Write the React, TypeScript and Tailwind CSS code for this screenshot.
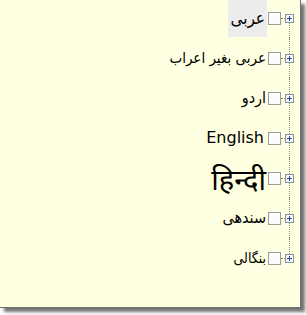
const arabic = "font-['DejaVu_Sans_Condensed','DejaVu_Sans',sans-serif]";

const rows = [
  { label: "عربی", dir: "rtl", cls: `${arabic} text-[17px]`, selected: true },
  { label: "عربی بغیر اعراب", dir: "rtl", cls: `${arabic} text-[15px]` },
  { label: "اردو", dir: "rtl", cls: `${arabic} text-[16px]` },
  { label: "English", dir: "ltr", cls: "font-['DejaVu_Sans',sans-serif] text-[16px] pr-[3px]" },
  { label: "हिन्दी", dir: "ltr", cls: "font-['Noto_Sans','DejaVu_Sans',sans-serif] text-[29px]" },
  { label: "سندھی", dir: "rtl", cls: `${arabic} text-[16px]` },
  { label: "بنگالی", dir: "rtl", cls: `${arabic} text-[14px]` },
];

const PlusBox = () => (
  <div className="w-[9px] h-[9px] border border-[#8597ad] bg-[#f7f8fa] flex items-center justify-center">
    <svg width="7" height="7" viewBox="0 0 7 7">
      <path d="M1 3.5h5M3.5 1v5" stroke="#2f4b96" strokeWidth="1" />
    </svg>
  </div>
);

export default function App() {
  return (
    <div className="w-[306px] h-[315px] bg-white">
      <div className="w-[301px] h-[308px] bg-[#ffffe1] border-r border-b border-[#707070] shadow-[4px_4px_3px_rgba(0,0,0,0.55)] overflow-hidden">
        <div className="-mt-[2px] flex flex-col pr-[6px]">
          {rows.map((r, i) => (
            <div key={i} className="h-[40px] flex items-center justify-end">
              <div
                dir={r.dir}
                className={`h-[37px] flex items-center text-black leading-none whitespace-nowrap ${r.cls} ${r.selected ? "bg-[#ececec] px-[2px]" : "px-[1px]"}`}
              >
                {r.label}
              </div>
              <div className="ml-[1px] w-[13px] h-[13px] border border-[#9c9c9c] bg-[#fcfcfc]" />
              <div className="w-[4px] h-[13px] flex items-center">
                <div className="w-full border-t border-dotted border-[#8a8a8a]" />
              </div>
              <div className="w-[9px] h-full flex flex-col items-center">
                <div className={`flex-1 border-l border-dotted ${i === 0 ? "border-transparent" : "border-[#8a8a8a]"}`} />
                <PlusBox />
                <div className={`flex-1 border-l border-dotted ${i === rows.length - 1 ? "border-transparent" : "border-[#8a8a8a]"}`} />
              </div>
            </div>
          ))}
        </div>
      </div>
    </div>
  );
}
